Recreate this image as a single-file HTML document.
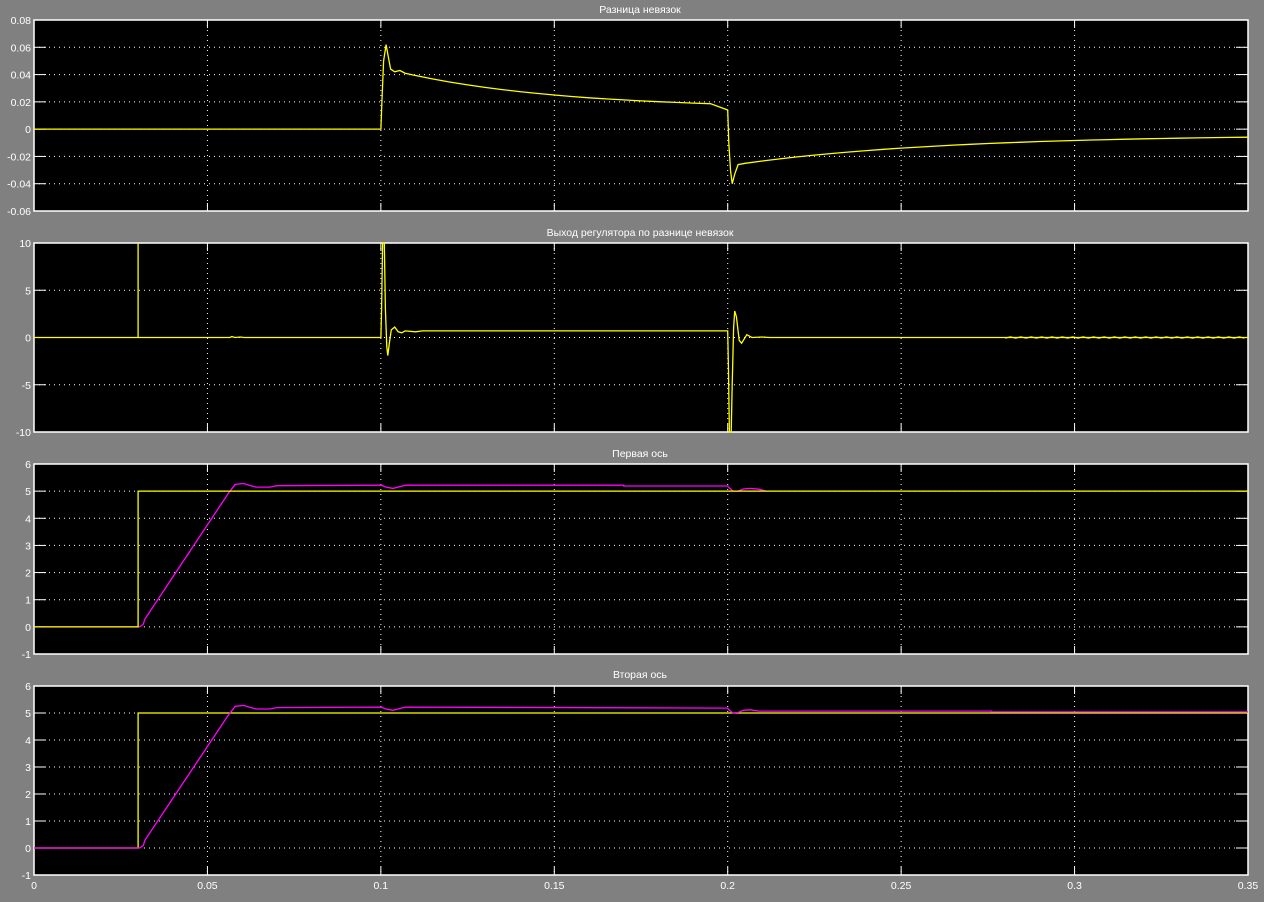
<!DOCTYPE html>
<html><head><meta charset="utf-8"><style>
html,body{margin:0;padding:0;background:#808080;width:1264px;height:902px;overflow:hidden}
svg{display:block}
text{font-family:"Liberation Sans","DejaVu Sans",sans-serif;font-size:10.5px;fill:#fff}
</style></head><body>
<svg id="s" width="1264" height="902" xmlns="http://www.w3.org/2000/svg">
<rect width="1264" height="902" fill="#808080"/>
<text x="640" y="13" text-anchor="middle">Разница невязок</text>
<text x="640" y="236" text-anchor="middle">Выход регулятора по разнице невязок</text>
<text x="640" y="457" text-anchor="middle">Первая ось</text>
<text x="640" y="678" text-anchor="middle">Вторая ось</text>
<g id="g"></g>
</svg>
<script>
var NS="http://www.w3.org/2000/svg",G=document.getElementById('g');
var L=34,R=1248;
function X(t){return L+(R-L)*t/0.35;}
function el(n,a,txt){var e=document.createElementNS(NS,n);for(var k in a)e.setAttribute(k,a[k]);if(txt!=null)e.textContent=txt;G.appendChild(e);return e;}
function axes(top,bot,ymin,ymax,step,fmt,xlabels){
 el('rect',{x:L,y:top,width:R-L,height:bot-top,fill:'#000',stroke:'#fff','stroke-width':1.5});
 var n=Math.round((ymax-ymin)/step);
 for(var i=0;i<=n;i++){var v=ymin+i*step,y=bot-(bot-top)*i/n;
  if(i>0&&i<n){el('line',{x1:L,y1:y,x2:R,y2:y,stroke:'#fff','stroke-dasharray':'1 4','stroke-width':1});
   el('line',{x1:L,y1:y,x2:L+12,y2:y,stroke:'#fff','stroke-width':1});el('line',{x1:R-12,y1:y,x2:R,y2:y,stroke:'#fff','stroke-width':1});}
  el('text',{x:L-3,y:y+4,'text-anchor':'end'},fmt(v));}
 for(var j=1;j<7;j++){var x=X(j*0.05);
  el('line',{x1:x,y1:top,x2:x,y2:bot,stroke:'#fff','stroke-dasharray':'1 4','stroke-width':1});
  el('line',{x1:x,y1:top,x2:x,y2:top+8,stroke:'#fff','stroke-width':1});el('line',{x1:x,y1:bot-8,x2:x,y2:bot,stroke:'#fff','stroke-width':1});}
 if(xlabels){var lb=['0','0.05','0.1','0.15','0.2','0.25','0.3','0.35'];
  for(var j=0;j<8;j++)el('text',{x:X(j*0.05),y:bot+14,'text-anchor':'middle'},lb[j]);}
 return function(v){return bot-(bot-top)*(v-ymin)/(ymax-ymin);};
}
function path(pts,Y,col){var d='';pts.forEach(function(p,i){d+=(i?'L':'M')+X(p[0]).toFixed(1)+' '+Y(p[1]).toFixed(1);});
 el('path',{d:d,fill:'none',stroke:col,'stroke-width':1.3});}
function f2(v){var r=Math.round(v*100)/100;return r==0?'0':r.toFixed(2).replace(/^(-?)0\./,'$10.');}
function fi(v){return String(Math.round(v));}
var Y1=axes(20,211,-0.06,0.08,0.02,f2);
var p=[[0,0],[0.1,0],[0.1003,0.02],[0.1008,0.05],[0.1015,0.062],[0.102,0.055],[0.1028,0.044],[0.104,0.042],[0.1055,0.043],[0.107,0.041]];
for(var t=0.11;t<=0.2;t+=0.005)p.push([t,0.015+0.026*Math.exp(-(t-0.107)/0.045)]);
p.push([0.2,0.014],[0.2003,-0.01],[0.2008,-0.03],[0.2013,-0.04],[0.202,-0.033],[0.203,-0.026],[0.205,-0.025]);
for(var t=0.21;t<=0.3505;t+=0.005)p.push([t,-0.004-0.021*Math.exp(-(t-0.205)/0.06)]);
path(p,Y1,'#ff0');
var Y2=axes(243,432,-10,10,5,fi);
path([[0,0],[0.03,0],[0.03,10],[0.03,0],[0.0565,0],[0.057,0.1],[0.058,0],[0.0595,0.05],[0.0605,0],[0.1,0],[0.1002,3],[0.1005,10],[0.101,10],[0.1013,3],[0.1017,-1],[0.102,-1.9],[0.1025,-0.5],[0.103,0.8],[0.104,1.1],[0.105,0.6],[0.106,0.5],[0.107,0.7],[0.11,0.6],[0.112,0.7],[0.2,0.7],[0.2002,-3],[0.2005,-10],[0.201,-10],[0.2013,-5],[0.2017,1],[0.202,2.8],[0.2025,2.2],[0.2033,-0.3],[0.204,-0.6],[0.2055,0.3],[0.207,0],[0.21,0.05],[0.212,0],[0.35,0]],Y2,'#ff0');
var q=[];for(var k=0;k<=46;k++){var t=0.28+k*0.0015;q.push([t,(k%2?0.06:-0.06)]);}path(q,Y2,'#ff0');
function ramp(extra){var m=[[0,0],[0.0305,0],[0.0315,0.1]];
 for(var t=0.032;t<=0.057;t+=0.001){var u=(t-0.031)/(0.058-0.031);m.push([t,0.1+5.2*u]);}
 m.push([0.058,5.25],[0.0605,5.28],[0.062,5.22],[0.064,5.15],[0.068,5.15],[0.07,5.2],[0.1,5.22],[0.1015,5.15],[0.1035,5.1],[0.105,5.15],[0.107,5.22]);
 return m.concat(extra);}
var Y3=axes(464,654,-1,6,1,fi);
path(ramp([[0.17,5.22],[0.17,5.19],[0.2,5.19],[0.2005,5.12],[0.2015,5.0],[0.203,5.0],[0.2045,5.08],[0.2065,5.1],[0.209,5.07],[0.211,5.0]]),Y3,'#f0f');
path([[0,0],[0.03,0],[0.03,5],[0.35,5]],Y3,'#ff0');
var Y4=axes(686,875,-1,6,1,fi,true);
path([[0,0],[0.03,0],[0.03,5],[0.35,5]],Y4,'#ff0');
path(ramp([[0.2,5.18],[0.2005,5.1],[0.2015,5.0],[0.203,5.02],[0.2045,5.1],[0.2065,5.12],[0.209,5.07],[0.276,5.07],[0.276,5.04],[0.35,5.04]]),Y4,'#f0f');
</script>
</body></html>
